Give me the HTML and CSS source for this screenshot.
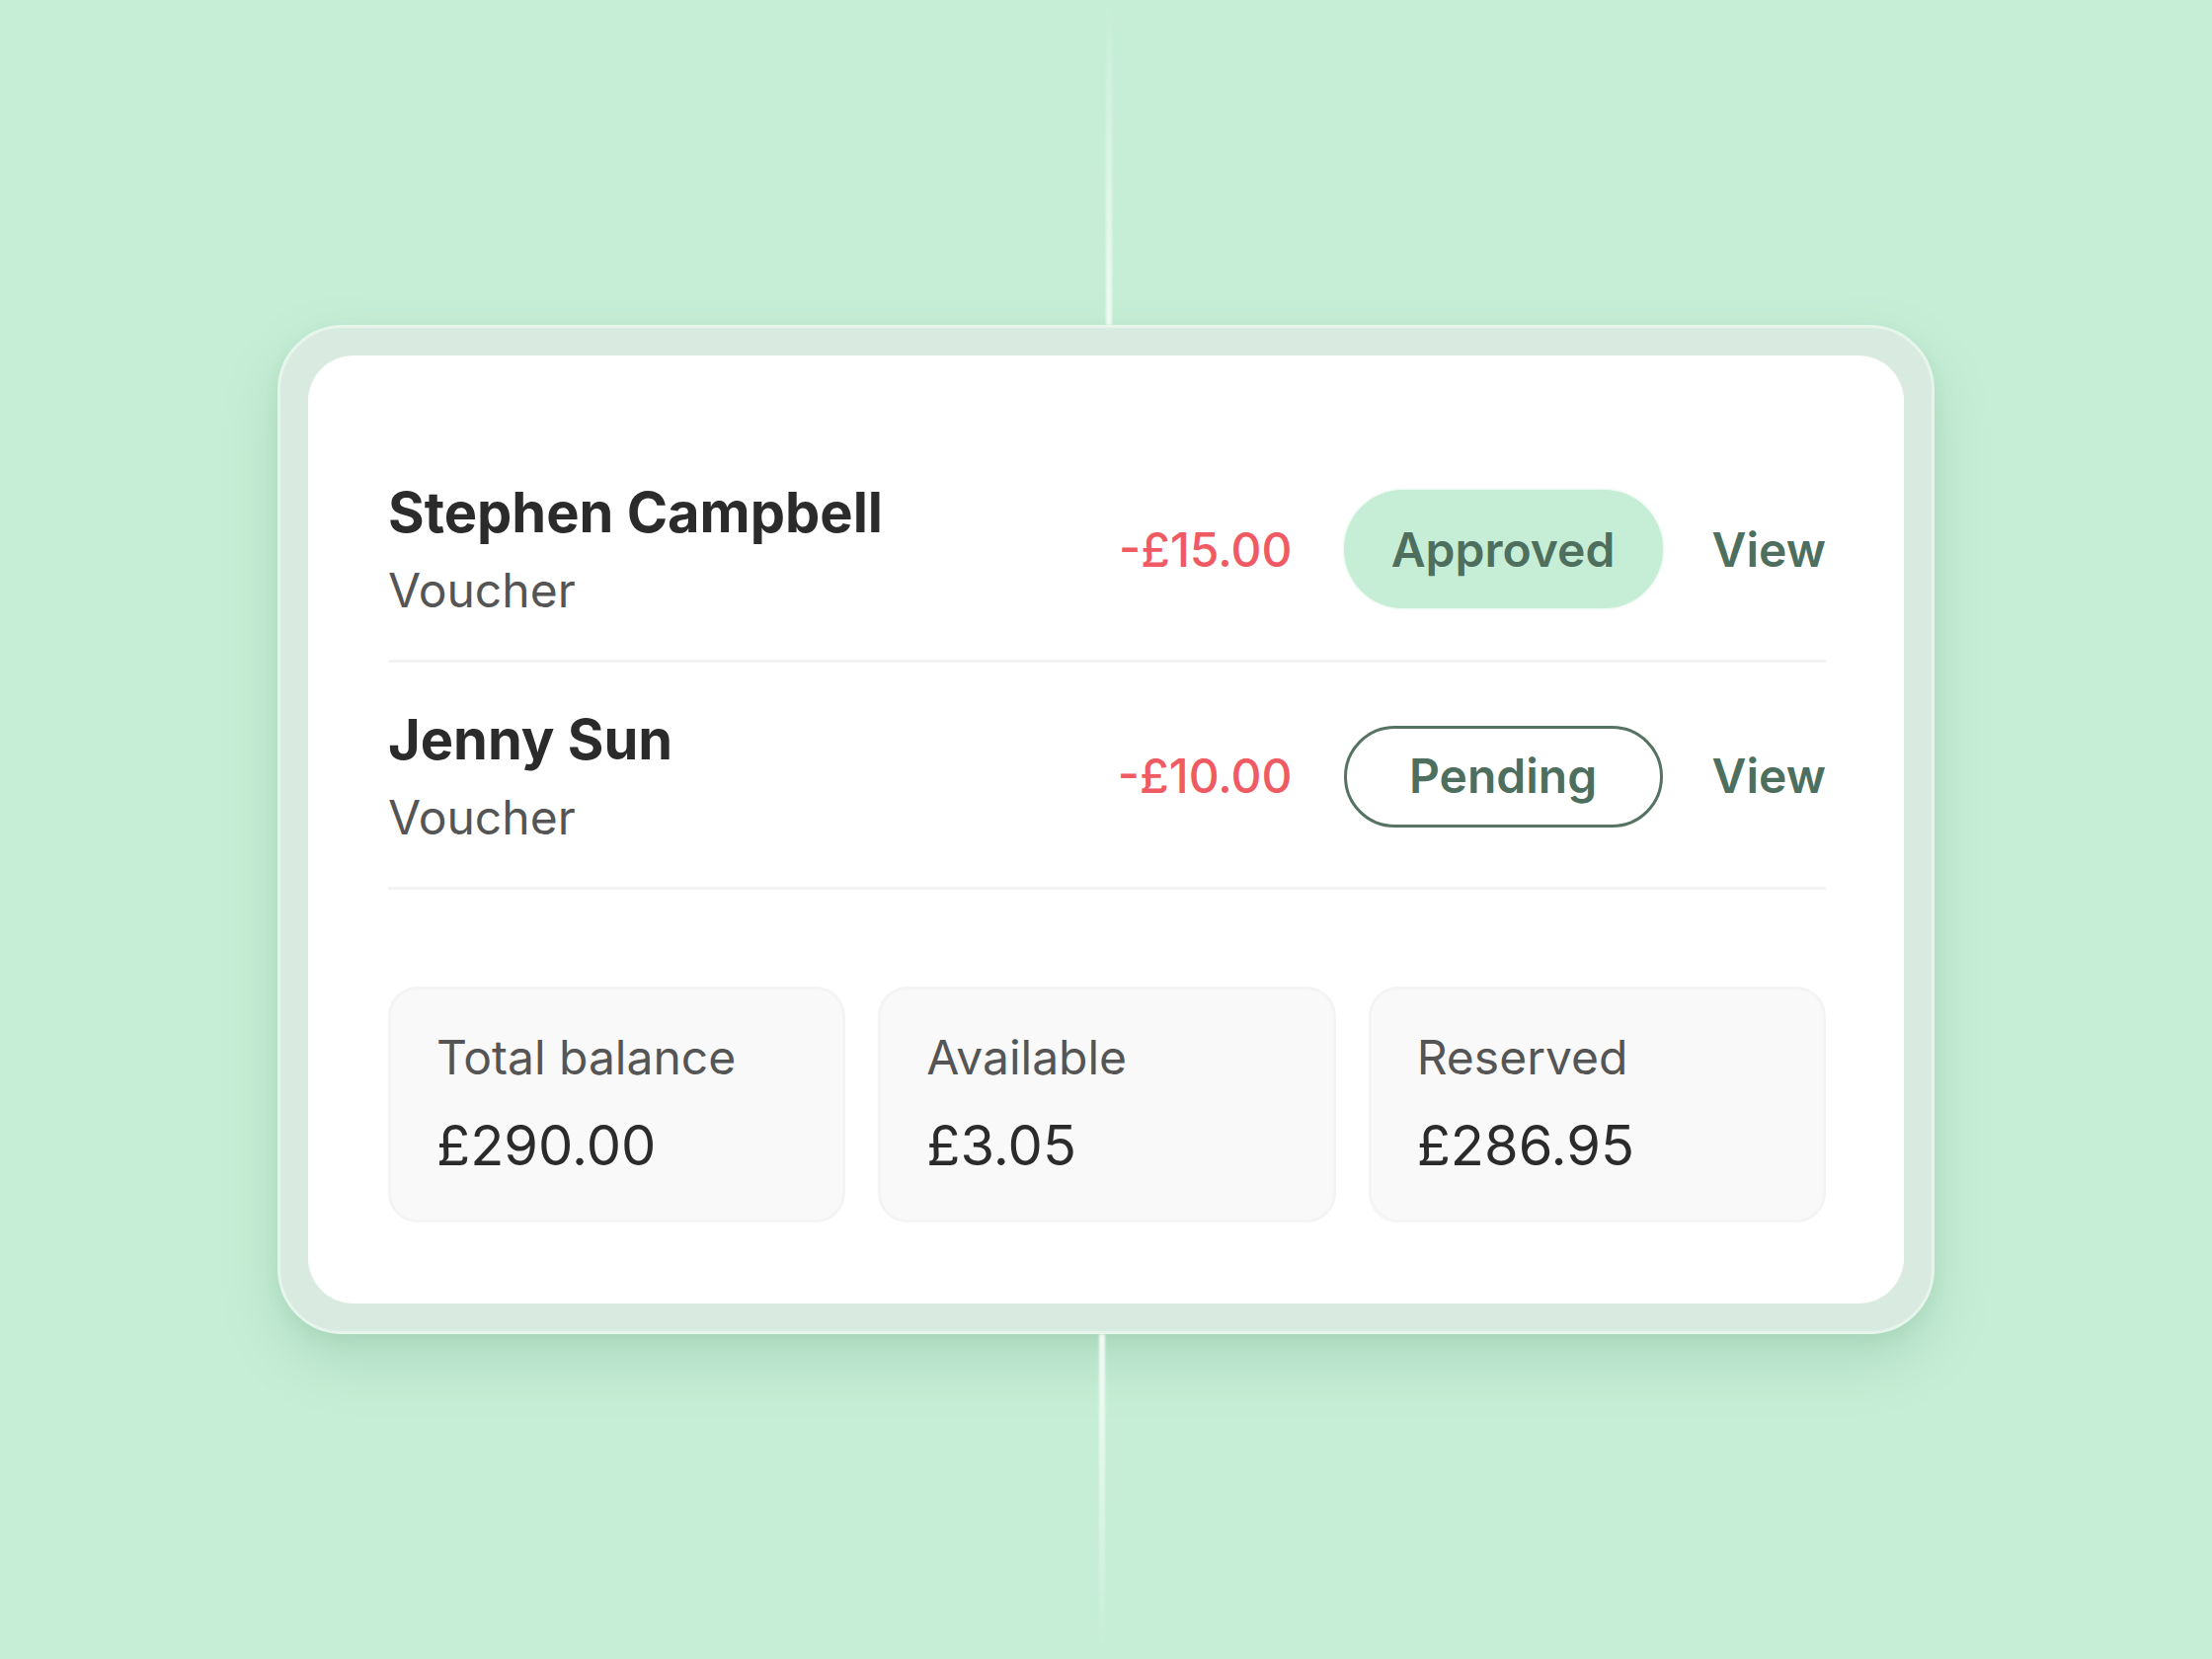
FILE: index.html
```html
<!DOCTYPE html>
<html lang="en">
<head>
<meta charset="utf-8">
<title>Transactions</title>
<link rel="stylesheet" href="styles.css">
</head>
<body>
<div class="stage">
  <div class="line line-top"></div>
  <div class="frame">
    <div class="card">
      <div class="row">
        <div class="who">
          <div class="name">Stephen Campbell</div>
          <div class="kind">Voucher</div>
        </div>
        <div class="actions">
          <div class="amount">-£15.00</div>
          <div class="pill pill-approved">Approved</div>
          <div class="view">View</div>
        </div>
      </div>
      <div class="row">
        <div class="who">
          <div class="name">Jenny Sun</div>
          <div class="kind">Voucher</div>
        </div>
        <div class="actions">
          <div class="amount">-£10.00</div>
          <div class="pill pill-pending">Pending</div>
          <div class="view">View</div>
        </div>
      </div>
      <div class="stats">
        <div class="stat">
          <div class="stat-label">Total balance</div>
          <div class="stat-value">£290.00</div>
        </div>
        <div class="stat">
          <div class="stat-label">Available</div>
          <div class="stat-value">£3.05</div>
        </div>
        <div class="stat">
          <div class="stat-label">Reserved</div>
          <div class="stat-value">£286.95</div>
        </div>
      </div>
    </div>
  </div>
  <div class="line line-bottom"></div>
</div>
</body>
</html>
```

FILE: styles.css
```css
* { box-sizing: border-box; }

html, body {
  margin: 0;
  padding: 0;
}

body {
  background: #c6eed6;
  font-family: "Inter", "Noto Sans", "Liberation Sans", sans-serif;
  width: 2240px;
  height: 1680px;
  overflow: hidden;
}

.stage {
  height: 1680px;
  display: flex;
  flex-direction: column;
  align-items: center;
}

.line {
  width: 6px;
  flex: none;
  filter: blur(1px);
}

.line-top {
  height: 329px;
  margin-left: 6px;
  background: linear-gradient(to bottom, rgba(255,255,255,0) 0%, rgba(255,255,255,0.25) 30%, rgba(255,255,255,0.75) 100%);
}

.line-bottom {
  height: 320px;
  margin-left: -8px;
  background: linear-gradient(to bottom, rgba(255,255,255,0.85) 0%, rgba(255,255,255,0.35) 60%, rgba(255,255,255,0) 100%);
}

.frame {
  flex: none;
  width: 1678px;
  height: 1022px;
  padding: 28px;
  border: 3px solid #e6f5ec;
  border-radius: 66px;
  background: #d9eae1;
  box-shadow: 0 26px 60px rgba(60, 130, 90, 0.18), 0 6px 16px rgba(60, 130, 90, 0.08);
}

.card {
  height: 100%;
  background: #ffffff;
  border-radius: 46px;
  padding: 81px 79px 81px 81px;
  display: flex;
  flex-direction: column;
}

.row {
  display: flex;
  align-items: center;
  justify-content: space-between;
  padding: 45px 0 41px;
  border-bottom: 3px solid #f3f3f3;
}

.who {
  display: flex;
  flex-direction: column;
}

.name {
  font-size: 56px;
  line-height: 1.2;
  font-weight: 700;
  color: #2b2b2b;
}

.kind {
  margin-top: 16px;
  font-size: 48px;
  line-height: 1.2;
  font-weight: 400;
  color: #555555;
}

.actions {
  display: flex;
  align-items: center;
}

.amount {
  font-size: 48px;
  line-height: 1.2;
  font-weight: 500;
  color: #ef5a63;
  text-align: right;
}

.pill {
  width: 323px;
  margin: 0 50px 0 52px;
  display: flex;
  align-items: center;
  justify-content: center;
  border-radius: 999px;
  font-size: 48px;
  line-height: 1.2;
  font-weight: 600;
  color: #4f6f5e;
}

.pill-approved {
  height: 120px;
  background: #c6eed6;
  box-shadow: 0 0 3px rgba(198, 238, 214, 0.9);
}

.pill-pending {
  height: 103px;
  border: 3px solid #557262;
  background: #ffffff;
}

.view {
  font-size: 48px;
  line-height: 1.2;
  font-weight: 600;
  color: #4f6f5e;
}

.stats {
  margin-top: 98px;
  display: grid;
  grid-template-columns: repeat(3, 1fr);
  gap: 33px;
}

.stat {
  height: 239px;
  padding: 40px 46px 0;
  background: #f9f9f9;
  border: 3px solid #f4f4f4;
  border-radius: 30px;
}

.stat-label {
  font-size: 48px;
  line-height: 1.2;
  font-weight: 400;
  color: #555555;
}

.stat-value {
  margin-top: 28px;
  font-size: 56px;
  line-height: 1.2;
  font-weight: 400;
  color: #2b2b2b;
}
```
